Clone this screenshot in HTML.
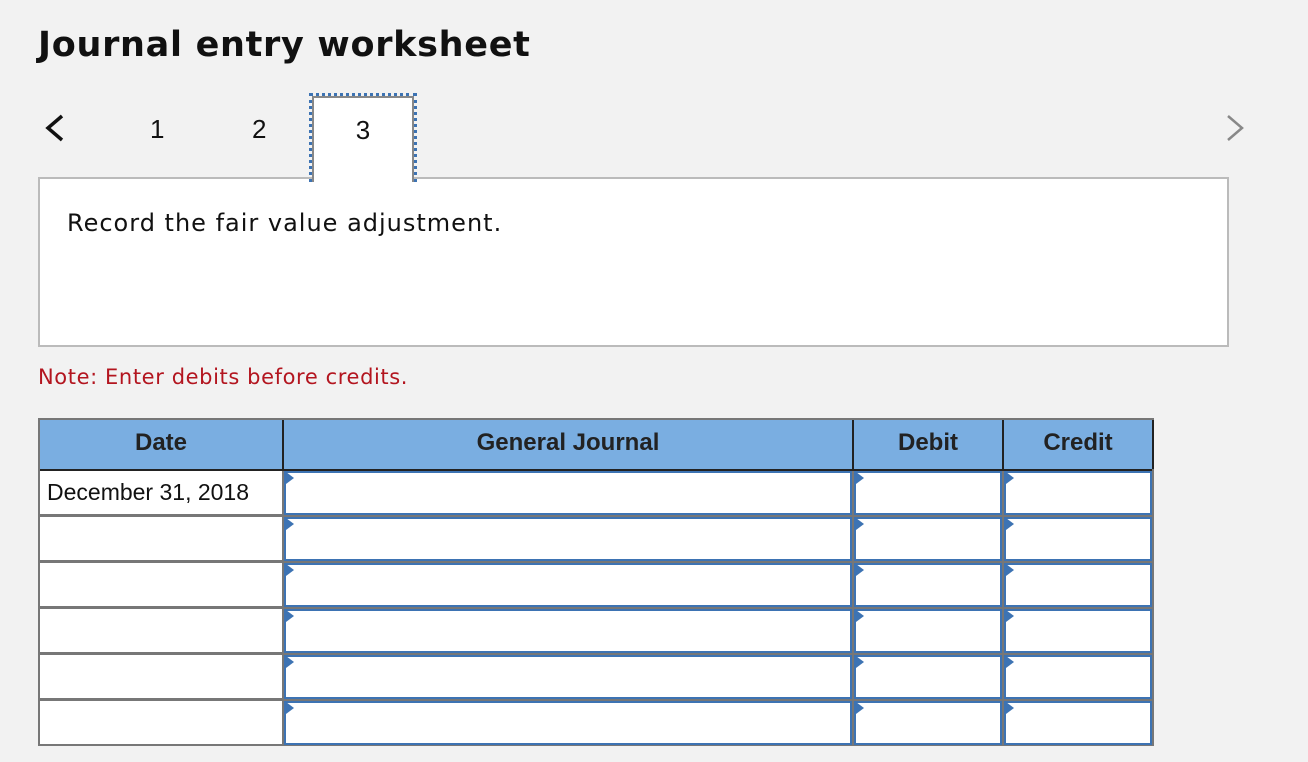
<!DOCTYPE html>
<html><head><style>
body{margin:0;width:1308px;height:762px;background:#f2f2f2;position:relative;overflow:hidden;font-family:"DejaVu Sans","Liberation Sans",sans-serif;color:#111}
.a{position:absolute}
.hd{position:absolute;top:420px;height:49px;background:#7aaee1;font:bold 24px "Liberation Sans",sans-serif;color:#222;text-align:center;line-height:46px;border-right:2px solid #222;box-sizing:border-box}
.cell{position:absolute;box-sizing:border-box;border:2px solid #3d73b3;background:#fff}
.tri{position:absolute;width:0;height:0;border-top:6px solid transparent;border-bottom:6px solid transparent;border-left:8px solid #3d73b3}
</style></head><body>
<div class="a" style="left:38px;top:25px;font-weight:bold;font-size:35px;letter-spacing:0.7px">Journal entry worksheet</div>
<svg class="a" style="left:40px;top:112px" width="30" height="32"><path d="M22 4 L8 16 L22 28" stroke="#111" stroke-width="3.5" fill="none"/></svg>
<svg class="a" style="left:1220px;top:112px" width="30" height="32"><path d="M8 4 L22 16 L8 28" stroke="#888" stroke-width="2.5" fill="none"/></svg>
<div class="a" style="left:150px;top:114px;font:26px 'Liberation Sans',sans-serif">1</div>
<div class="a" style="left:252px;top:114px;font:26px 'Liberation Sans',sans-serif">2</div>
<div class="a" style="left:38px;top:177px;width:1191px;height:170px;box-sizing:border-box;border:2px solid #bbb;background:#fff"></div>
<div class="a" style="left:309px;top:93px;width:108px;height:89px;box-sizing:border-box;border:3px dotted #3d73b3;"></div>
<div class="a" style="left:312px;top:96px;width:102px;height:86px;box-sizing:border-box;border:2px solid #888;border-bottom:none;background:#fff;text-align:center;font:26px 'Liberation Sans',sans-serif;line-height:64px">3</div>
<div class="a" style="left:67px;top:209px;font-size:24px;letter-spacing:1px">Record the fair value adjustment.</div>
<div class="a" style="left:38px;top:365px;font-size:21px;letter-spacing:0.6px;color:#b3151f">Note: Enter debits before credits.</div>
<div class="a" style="left:38px;top:418px;width:1116px;height:328px;background:#777"></div>
<div class="hd" style="left:40px;width:244px">Date</div>
<div class="hd" style="left:284px;width:570px">General Journal</div>
<div class="hd" style="left:854px;width:150px">Debit</div>
<div class="hd" style="left:1004px;width:150px;border-right:2px solid #222">Credit</div>
<div class="a" style="left:40px;top:469px;width:1112px;height:2px;background:#222"></div>
<div id="rows"></div>
<script>
var h='';
for(var i=0;i<6;i++){var t=471+i*46;
h+='<div class="a" style="left:40px;top:'+t+'px;width:242px;height:43px;background:#fff;font:23px \'Liberation Sans\',sans-serif;line-height:42px;padding-left:7px;box-sizing:border-box">'+(i==0?'December 31, 2018':'')+'</div>';
[[284,568],[854,148],[1004,148]].forEach(function(c){
h+='<div class="cell" style="left:'+c[0]+'px;top:'+t+'px;width:'+c[1]+'px;height:44px"></div>';
h+='<div class="tri" style="left:'+(c[0]+2)+'px;top:'+(t+1)+'px"></div>';});}
document.getElementById('rows').innerHTML=h;
</script>
</body></html>
